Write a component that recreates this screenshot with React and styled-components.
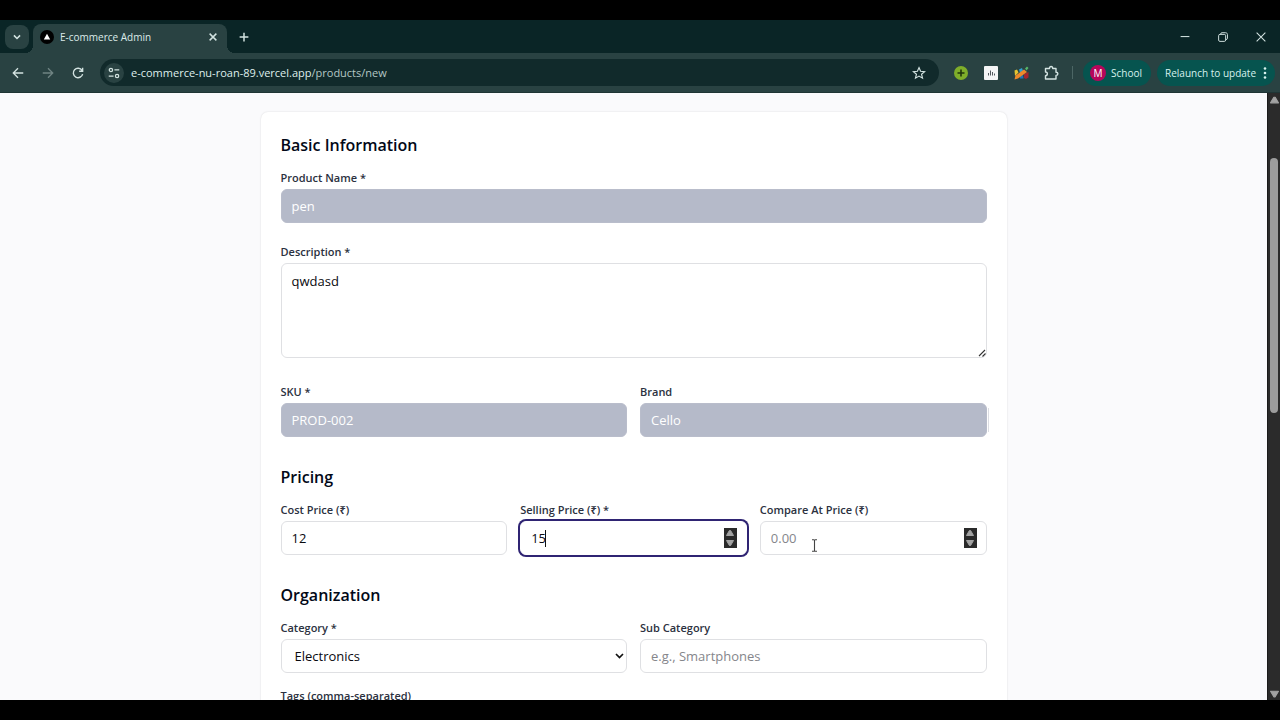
import { useState } from "react";
import styled, { createGlobalStyle, css } from "styled-components";

const GlobalStyle = createGlobalStyle`
  * {
    box-sizing: border-box;
  }

  body {
    margin: 0;
    background: #000;
    font-family: "Open Sans", "Noto Sans", sans-serif;
    color: #020817;
  }

  button,
  input,
  textarea,
  select {
    font-family: inherit;
    margin: 0;
  }
`;

const Screen = styled.div`
  height: 100vh;
  padding: 20px 0;
  display: flex;
  flex-direction: column;
  overflow: hidden;
  background: #000;
`;

const TabStrip = styled.header`
  height: 33px;
  flex: none;
  display: flex;
  align-items: center;
  padding: 0 12px 0 5px;
  background: #0a2526;
`;

const IconButton = styled.button`
  width: ${(props) => props.size || 24}px;
  height: ${(props) => props.size || 24}px;
  flex: none;
  display: flex;
  align-items: center;
  justify-content: center;
  padding: 0;
  border: none;
  border-radius: ${(props) => (props.$square ? 8 : 12)}px;
  background: ${(props) => props.fill || "transparent"};
  color: ${(props) => (props.$dim ? "#6f8483" : "#d3e3e1")};
`;

const Tab = styled.div`
  position: relative;
  align-self: flex-end;
  width: 194px;
  height: 29px;
  margin: 0 5px 0 4px;
  padding: 0 2px 4px 7px;
  display: flex;
  align-items: center;
  border-radius: 8px 8px 0 0;
  background: #294242;
  color: #dcebe9;
  font-size: 10px;

  &::before,
  &::after {
    content: "";
    position: absolute;
    bottom: 0;
    width: 8px;
    height: 8px;
  }

  &::before {
    right: 100%;
    background: radial-gradient(circle at 0 0, transparent 8px, #294242 8px);
  }

  &::after {
    left: 100%;
    background: radial-gradient(circle at 100% 0, transparent 8px, #294242 8px);
  }
`;

const TabTitle = styled.span`
  flex: 1;
  margin-left: 6px;
  white-space: nowrap;
`;

const WindowControls = styled.div`
  margin-left: auto;
  display: flex;
  gap: 24px;

  button {
    width: 14px;
  }
`;

const Toolbar = styled.nav`
  height: 40px;
  flex: none;
  display: flex;
  align-items: center;
  padding: 0 5px 0 6px;
  border-bottom: 1px solid #1f3535;
  background: #294242;
`;

const NavButtons = styled.div`
  display: flex;
  gap: 6px;
  margin-right: 10px;
`;

const AddressBar = styled.div`
  flex: 1;
  height: 27px;
  display: flex;
  align-items: center;
  padding: 0 8px 0 4px;
  border-radius: 14px;
  background: #112a2b;
`;

const Address = styled.div`
  flex: 1;
  margin-left: 7px;
  color: #dfeeec;
  font-size: 11px;

  span {
    color: #b4c7c5;
  }
`;

const Extensions = styled.div`
  display: flex;
  align-items: center;
  gap: 6px;
  margin: 0 9px 0 10px;
`;

const Divider = styled.span`
  width: 1px;
  height: 13px;
  margin-right: 10px;
  background: #4c6665;
`;

const Pill = styled.button`
  height: 26px;
  display: flex;
  align-items: center;
  gap: ${(props) => (props.$wide ? 3 : 5)}px;
  padding: ${(props) => (props.$wide ? "0 4px 0 8px" : "0 9px 0 7px")};
  margin-right: ${(props) => (props.$wide ? 0 : 6)}px;
  border: none;
  border-radius: 13px;
  background: #06544f;
  color: #d6f2ee;
  font-size: 10px;
  white-space: nowrap;
`;

const Avatar = styled.span`
  width: 16px;
  height: 16px;
  display: flex;
  align-items: center;
  justify-content: center;
  border-radius: 50%;
  background: #b5065b;
  color: #fff;
  font-size: 10px;
`;

const Viewport = styled.div`
  flex: 1;
  min-height: 0;
  display: flex;
`;

const Page = styled.main`
  flex: 1;
  min-width: 0;
  padding-top: 19px;
  overflow: hidden;
  background: #fafafc;
`;

const ScrollTrack = styled.div`
  width: 13px;
  flex: none;
  display: flex;
  flex-direction: column;
  align-items: center;
  padding: 3px 0 2px;
  border-left: 1px solid #1b1b1b;
  background: #2b2b2b;
`;

const ScrollRail = styled.div`
  flex: 1;
  width: 8px;
  padding-top: 54px;
`;

const ScrollThumb = styled.div`
  height: 48%;
  border-radius: 4px;
  background: #9c9c9c;
`;

const Card = styled.form`
  max-width: 746px;
  min-height: 800px;
  margin: 0 auto;
  padding: 20px;
  border-radius: 7px;
  background: #fff;
  box-shadow: 0 0 2px rgba(0, 0, 0, 0.14);
`;

const Section = styled.section`
  margin-bottom: 27px;
`;

const SectionTitle = styled.h2`
  margin: 0 0 10px;
  font-size: 16px;
  line-height: 26px;
  font-weight: 600;
  color: #020817;
`;

const Grid = styled.div`
  display: grid;
  grid-template-columns: repeat(${(props) => props.columns || 1}, 1fr);
  gap: 13px;
`;

const Stack = styled.div`
  display: grid;
  gap: 19px;
`;

const FieldBox = styled.div`
  display: flex;
  flex-direction: column;
  gap: 1px;
  padding-bottom: ${(props) => (props.$multiline ? 5 : 0)}px;
`;

const Label = styled.label`
  font-size: 11px;
  line-height: 20px;
  font-weight: 600;
  color: #2b3140;
`;

const Control = styled.div`
  position: relative;
  display: flex;
`;

const controlStyles = css`
  width: 100%;
  border: 1px solid #dfe0e3;
  border-radius: 6px;
  outline: none;
  background: #fff;
  color: #0a0a0f;
  font-size: 13px;
  line-height: 20px;
`;

const Input = styled.input`
  ${controlStyles}
  height: 34px;
  padding: 0 10px;
  appearance: textfield;

  &::-webkit-inner-spin-button {
    display: none;
  }

  &::placeholder {
    color: #85868b;
  }

  ${(props) =>
    props.$filled &&
    css`
      border-color: #b9bdcb;
      background: #b5bac9;
      color: #fff;
    `}

  ${(props) =>
    props.$active &&
    css`
      border-color: #fff;
      box-shadow: 0 0 0 2px #2f2473;
    `}
`;

const Textarea = styled.textarea`
  ${controlStyles}
  height: 95px;
  padding: 7px 10px;
  resize: none;
`;

const Select = styled.select`
  ${controlStyles}
  height: 34px;
  padding: 0 13px;
  appearance: none;
`;

const Overlay = styled.span`
  position: absolute;
  right: ${(props) => props.right}px;
  bottom: ${(props) => props.bottom}px;
  display: flex;
  pointer-events: none;
`;

const Caret = styled.span`
  position: absolute;
  left: 25px;
  top: 9px;
  width: 1px;
  height: 17px;
  background: #111;
`;

const Pointer = styled.svg`
  position: absolute;
  left: 51px;
  top: 18px;
`;

const EdgeMark = styled.span`
  position: absolute;
  left: calc(100% + 1px);
  top: 5px;
  width: 1px;
  height: 24px;
  background: #dcdde2;
`;

const SpinBox = styled.div`
  position: absolute;
  top: 7px;
  right: 10px;
  width: 13px;
  height: 20px;
  display: grid;
  background: #2a2a2a;
`;

const SpinButton = styled.button`
  display: flex;
  align-items: center;
  justify-content: center;
  padding: 0;
  border: none;
  background: none;
  color: #a3a3a3;
`;

const Icon = ({ size = 16, stroke = 1.5, children }) => (
  <svg
    width={size}
    height={size}
    viewBox="0 0 16 16"
    fill="none"
    stroke="currentColor"
    strokeWidth={stroke}
  >
    {children}
  </svg>
);

const Triangle = ({ down, width = 8, height = 6 }) => (
  <svg width={width} height={height} viewBox="0 0 8 6">
    <path
      d={down ? "M0.5 0.5h7L4.6 5.5h-1.2z" : "M0.5 5.5h7L4.6 0.5h-1.2z"}
      fill="#a3a3a3"
      stroke="#a3a3a3"
      strokeLinejoin="round"
    />
  </svg>
);

const Field = ({ id, label, multiline, children }) => (
  <FieldBox $multiline={multiline}>
    <Label htmlFor={id}>{label}</Label>
    <Control>{children}</Control>
  </FieldBox>
);

const Spinner = ({ onStep }) => (
  <SpinBox>
    <SpinButton type="button" aria-label="Increase" onClick={() => onStep(1)}>
      <Triangle />
    </SpinButton>
    <SpinButton type="button" aria-label="Decrease" onClick={() => onStep(-1)}>
      <Triangle down />
    </SpinButton>
  </SpinBox>
);

const BrowserTabs = () => (
  <TabStrip>
    <IconButton fill="#294242" $square aria-label="Search tabs">
      <Icon size={14} stroke={1.8}>
        <path d="M4.5 6.2 8 9.7l3.5-3.5" />
      </Icon>
    </IconButton>
    <Tab>
      <svg width="14" height="14" viewBox="0 0 14 14">
        <circle cx="7" cy="7" r="7" fill="#000" />
        <path d="M7 3.8 10.2 9.4H3.8z" fill="#fff" />
      </svg>
      <TabTitle>E-commerce Admin</TabTitle>
      <IconButton aria-label="Close tab">
        <Icon size={12} stroke={1.9}>
          <path d="M3.5 3.5l9 9M12.5 3.5l-9 9" />
        </Icon>
      </IconButton>
    </Tab>
    <IconButton aria-label="New tab">
      <Icon size={14} stroke={1.7}>
        <path d="M8 3v10M3 8h10" />
      </Icon>
    </IconButton>
    <WindowControls>
      <IconButton aria-label="Minimize">
        <Icon size={14} stroke={1.2}>
          <path d="M3 7.5h10" />
        </Icon>
      </IconButton>
      <IconButton aria-label="Restore">
        <Icon size={14} stroke={1.1}>
          <rect x="3" y="5" width="8" height="8" rx="1.5" />
          <path d="M5.2 4.8c0-1 .7-1.7 1.7-1.7h4c1.3 0 2.2.9 2.2 2.2v4c0 1-.7 1.7-1.7 1.7" />
        </Icon>
      </IconButton>
      <IconButton aria-label="Close">
        <Icon size={14} stroke={1.2}>
          <path d="M3 3l10 10M13 3L3 13" />
        </Icon>
      </IconButton>
    </WindowControls>
  </TabStrip>
);

const BrowserToolbar = () => (
  <Toolbar>
    <NavButtons>
      <IconButton aria-label="Back">
        <Icon size={14}>
          <path d="M14 8H3M8 2.6 2.6 8 8 13.4" />
        </Icon>
      </IconButton>
      <IconButton $dim aria-label="Forward">
        <Icon size={14}>
          <path d="M2 8h11M8 2.6 13.4 8 8 13.4" />
        </Icon>
      </IconButton>
      <IconButton aria-label="Reload">
        <Icon size={14} stroke={1.6}>
          <path d="M12.6 5A5.4 5.4 0 1 0 13.3 9.2M13.3 2v4H9.3" />
        </Icon>
      </IconButton>
    </NavButtons>
    <AddressBar>
      <IconButton size={20} fill="#294242" aria-label="Site information">
        <Icon size={14} stroke={1.4}>
          <circle cx="4.5" cy="4.5" r="1.9" />
          <path d="M8.5 4.5H14M2 11.5h5.5" />
          <circle cx="11.5" cy="11.5" r="1.9" />
        </Icon>
      </IconButton>
      <Address>
        e-commerce-nu-roan-89.vercel.app<span>/products/new</span>
      </Address>
      <IconButton aria-label="Bookmark">
        <Icon size={14} stroke={1.3}>
          <path d="M8 1.8l1.8 4.2 4.6.4-3.5 3 1.1 4.5L8 11.5l-4 2.4 1.1-4.5-3.5-3 4.6-.4z" />
        </Icon>
      </IconButton>
    </AddressBar>
    <Extensions>
      <IconButton aria-label="Add extension">
        <svg width="14" height="14" viewBox="0 0 14 14">
          <circle cx="7" cy="7" r="7" fill="#7fae2a" />
          <path d="M7 3.5v7M3.5 7h7" stroke="#20350c" strokeWidth="1.6" />
        </svg>
      </IconButton>
      <IconButton aria-label="Statistics extension">
        <svg width="14" height="14" viewBox="0 0 14 14">
          <rect width="14" height="14" rx="1" fill="#f5f5f6" />
          <path
            d="M4.5 7v2.5M6.5 4.5v5M8.5 6v3.5M10.5 7.500v2"
            stroke="#555a60"
            strokeWidth="1"
          />
        </svg>
      </IconButton>
      <IconButton aria-label="Color picker extension">
        <svg width="15" height="14" viewBox="0 0 15 14">
          <path d="M.5 4.500 3 3.500l1.500 3L1 10z" fill="#e6c431" />
          <path d="M5 3.500l3-1.500 1 3L6 7z" fill="#2f9fd0" />
          <path d="M10 8l4.500-2v5.500L12 13l-2-1z" fill="#a3262e" />
          <path d="M6 10l3-1 .5 3.500H6z" fill="#2374b8" />
          <path d="M.5 13.500l1-4L10 3.500 13 6 4 12.500z" fill="#ef8a2b" />
          <path d="M11 2.500l2-2 1.500 1.500-2 2.500z" fill="#57b56a" />
        </svg>
      </IconButton>
      <IconButton aria-label="Extensions">
        <Icon size={16} stroke={1.4}>
          <path
            strokeLinejoin="round"
            d="M2.500 3.500h4c0-2.600 3.200-2.600 3.200 0h3.300v3.700c2.500 0 2.500 3.200 0 3.200V14H2.500v-3.300c2.500 0 2.500-3.700 0-3.700z"
          />
        </Icon>
      </IconButton>
    </Extensions>
    <Divider />
    <Pill>
      <Avatar>M</Avatar>
      School
    </Pill>
    <Pill $wide>
      Relaunch to update
      <svg width="12" height="14" viewBox="0 0 12 14" fill="#d6f2ee">
        <circle cx="6" cy="2.5" r="1.3" />
        <circle cx="6" cy="7" r="1.3" />
        <circle cx="6" cy="11.5" r="1.3" />
      </svg>
    </Pill>
  </Toolbar>
);

const App = () => {
  const [selling, setSelling] = useState("15");
  const [compare, setCompare] = useState("");

  return (
    <>
      <GlobalStyle />
      <Screen>
        <BrowserTabs />
        <BrowserToolbar />

        <Viewport>
          <Page>
            <Card>
              <Section>
                <SectionTitle>Basic Information</SectionTitle>
                <Stack>
                  <Field id="name" label="Product Name *">
                    <Input id="name" defaultValue="pen" $filled />
                  </Field>
                  <Field id="description" label="Description *" multiline>
                    <Textarea id="description" defaultValue="qwdasd" />
                    <Overlay right={1} bottom={1}>
                      <svg width="8" height="8" viewBox="0 0 8 8">
                        <path
                          d="M1 7l6-6M4.5 7.5l3-3"
                          stroke="#333"
                          strokeWidth="1.1"
                        />
                      </svg>
                    </Overlay>
                  </Field>
                  <Grid columns={2}>
                    <Field id="sku" label="SKU *">
                      <Input id="sku" defaultValue="PROD-002" $filled />
                    </Field>
                    <Field id="brand" label="Brand">
                      <Input id="brand" defaultValue="Cello" $filled />
                      <EdgeMark />
                    </Field>
                  </Grid>
                </Stack>
              </Section>

              <Section>
                <SectionTitle>Pricing</SectionTitle>
                <Grid columns={3}>
                  <Field id="cost" label="Cost Price (₹)">
                    <Input id="cost" type="number" defaultValue="12" />
                  </Field>
                  <Field id="selling" label="Selling Price (₹) *">
                    <Input
                      id="selling"
                      type="number"
                      value={selling}
                      onChange={(e) => setSelling(e.target.value)}
                      $active
                    />
                    <Caret />
                    <Spinner
                      onStep={(n) => setSelling(String(Number(selling) + n))}
                    />
                  </Field>
                  <Field id="compare" label="Compare At Price (₹)">
                    <Input
                      id="compare"
                      type="number"
                      placeholder="0.00"
                      value={compare}
                      onChange={(e) => setCompare(e.target.value)}
                    />
                    <Spinner
                      onStep={(n) => setCompare(String(Number(compare) + n))}
                    />
                    <Pointer width="7" height="13" viewBox="0 0 7 13">
                      <path
                        d="M1 .7h1.8l.7.6.7-.6H6M3.5 1.3v10.4M1 12.3h1.8l.7-.6.7.6H6"
                        fill="none"
                        stroke="#444"
                        strokeWidth="1.1"
                      />
                    </Pointer>
                  </Field>
                </Grid>
              </Section>

              <Section>
                <SectionTitle>Organization</SectionTitle>
                <Grid>
                  <Grid columns={2}>
                    <Field id="category" label="Category *">
                      <Select id="category" defaultValue="Electronics">
                        <option>Electronics</option>
                      </Select>
                      <Overlay right={3} bottom={13}>
                        <svg width="9" height="8" viewBox="0 0 9 8">
                          <path
                            d="M1 2l3.5 3.5L8 2"
                            fill="none"
                            stroke="#111"
                            strokeWidth="1.7"
                          />
                        </svg>
                      </Overlay>
                    </Field>
                    <Field id="subcategory" label="Sub Category">
                      <Input id="subcategory" placeholder="e.g., Smartphones" />
                    </Field>
                  </Grid>
                  <Field id="tags" label="Tags (comma-separated)">
                    <Input id="tags" />
                  </Field>
                </Grid>
              </Section>
            </Card>
          </Page>
          <ScrollTrack>
            <Triangle width={9} height={8} />
            <ScrollRail>
              <ScrollThumb />
            </ScrollRail>
            <Triangle down width={9} height={8} />
          </ScrollTrack>
        </Viewport>
      </Screen>
    </>
  );
};

export default App;
